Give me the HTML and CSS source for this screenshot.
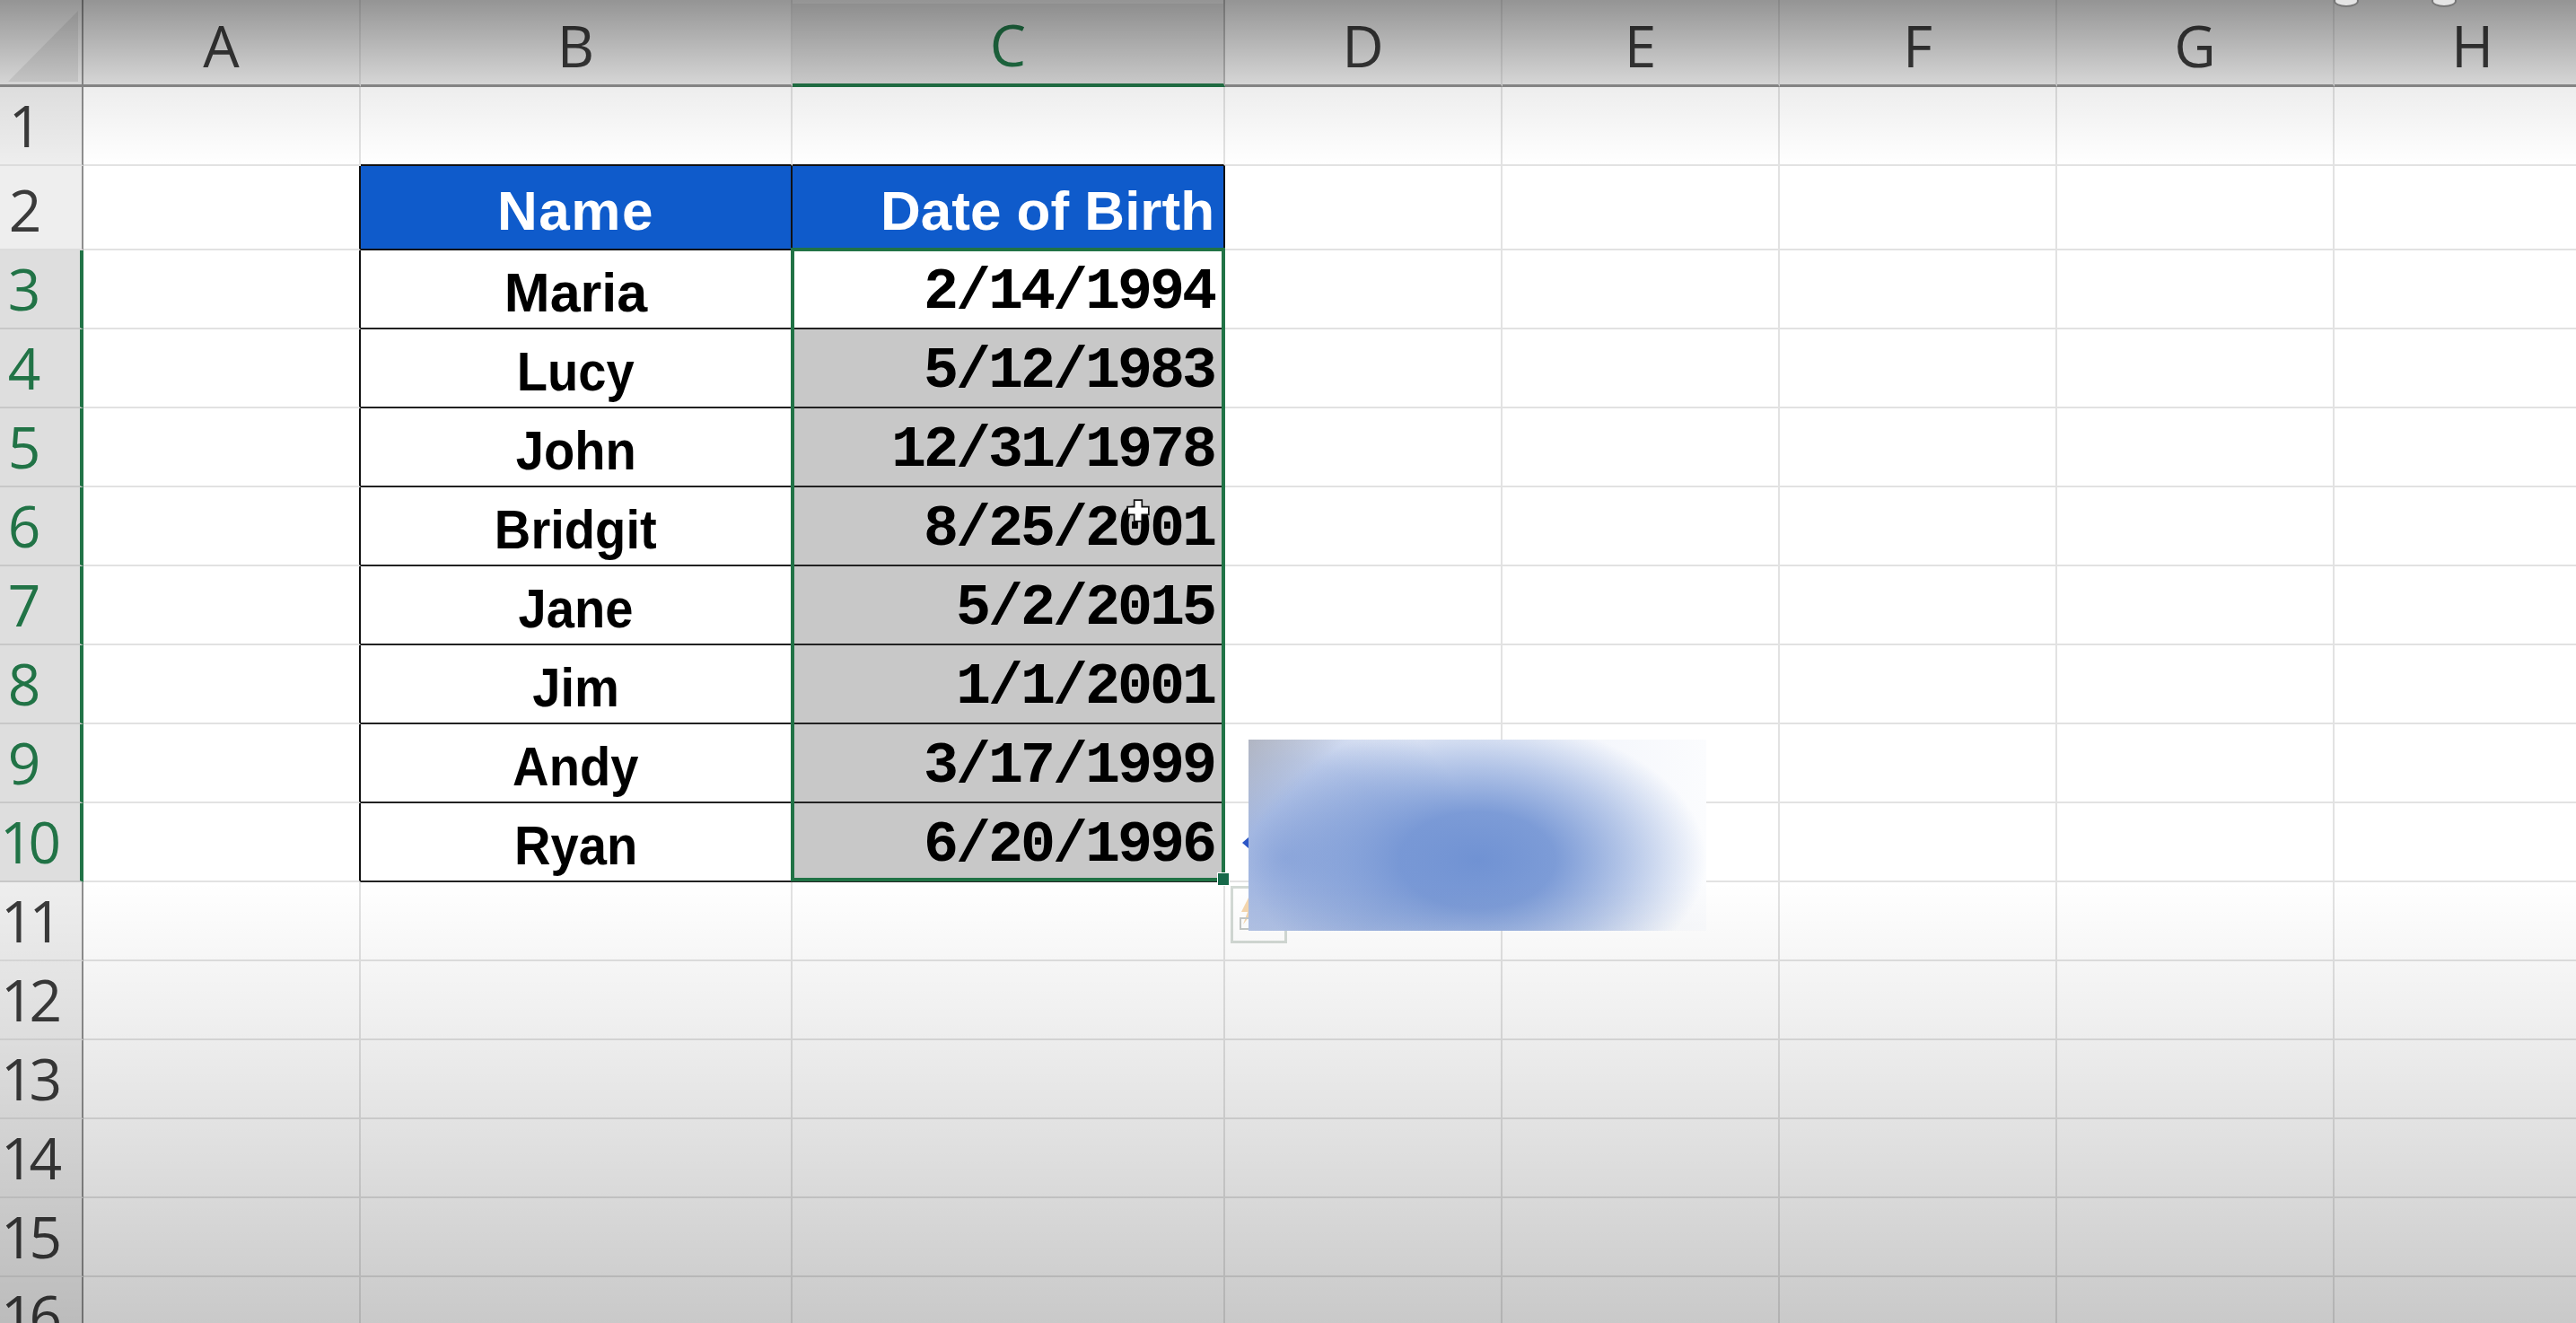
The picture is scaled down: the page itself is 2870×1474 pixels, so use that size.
FILE: index.html
```html
<!DOCTYPE html>
<html lang="en">
<head>
<meta charset="utf-8">
<title>Date of Birth sheet</title>
<link rel="stylesheet" href="styles.css">
</head>
<body>
<main class="sheet">
<table class="grid">
<colgroup><col class="c0"><col class="cs"><col class="cb"><col class="cc"><col class="cs"><col class="cs"><col class="cs"><col class="cs"><col class="cs"></colgroup>
<thead>
<tr class="rh"><th class="corner"><svg class="tri" width="78" height="79" viewBox="0 0 78 79"><polygon points="78,0 78,79 0,79"/></svg></th><th class="col">A</th><th class="col">B</th><th class="col sel">C</th><th class="col">D</th><th class="col">E</th><th class="col">F</th><th class="col">G</th><th class="col">H</th></tr>
</thead>
<tbody>
<tr class="r1"><th class="row one">1</th><td></td><td class="top"></td><td class="top"></td><td></td><td></td><td></td><td></td><td></td></tr>
<tr class="r2"><th class="row one">2</th><td class="lf"></td><td class="hd name">Name</td><td class="hd dob">Date of Birth</td><td></td><td></td><td></td><td></td><td></td></tr>
<tr><th class="row one on">3</th><td class="lf"></td><td class="nm">Maria</td><td class="dt act">2/14/1994</td><td></td><td></td><td></td><td></td><td></td></tr>
<tr><th class="row one on">4</th><td class="lf"></td><td class="nm"><span class="sq">Lucy</span></td><td class="dt">5/12/1983</td><td></td><td></td><td></td><td></td><td></td></tr>
<tr><th class="row one on">5</th><td class="lf"></td><td class="nm"><span class="sq">John</span></td><td class="dt">12/31/1978</td><td></td><td></td><td></td><td></td><td></td></tr>
<tr><th class="row one on">6</th><td class="lf"></td><td class="nm"><span class="sq">Bridgit</span></td><td class="dt">8/25/2001</td><td></td><td></td><td></td><td></td><td></td></tr>
<tr><th class="row one on">7</th><td class="lf"></td><td class="nm"><span class="sq">Jane</span></td><td class="dt">5/2/2015</td><td></td><td></td><td></td><td></td><td></td></tr>
<tr><th class="row one on">8</th><td class="lf"></td><td class="nm"><span class="sq">Jim</span></td><td class="dt">1/1/2001</td><td></td><td></td><td></td><td></td><td></td></tr>
<tr><th class="row one on">9</th><td class="lf"></td><td class="nm"><span class="sq">Andy</span></td><td class="dt">3/17/1999</td><td></td><td></td><td></td><td></td><td></td></tr>
<tr><th class="row on">10</th><td class="lf"></td><td class="nm"><span class="sq">Ryan</span></td><td class="dt">6/20/1996</td><td></td><td></td><td></td><td></td><td></td></tr>
<tr><th class="row">11</th><td></td><td></td><td></td><td></td><td></td><td></td><td></td><td></td></tr>
<tr><th class="row">12</th><td></td><td></td><td></td><td></td><td></td><td></td><td></td><td></td></tr>
<tr><th class="row">13</th><td></td><td></td><td></td><td></td><td></td><td></td><td></td><td></td></tr>
<tr><th class="row">14</th><td></td><td></td><td></td><td></td><td></td><td></td><td></td><td></td></tr>
<tr><th class="row">15</th><td></td><td></td><td></td><td></td><td></td><td></td><td></td><td></td></tr>
<tr><th class="row">16</th><td></td><td></td><td></td><td></td><td></td><td></td><td></td><td></td></tr>
</tbody>
</table>
<div class="frame"></div>
<div class="handle"></div>
<div class="quick">
<svg class="bolt" width="22" height="40" viewBox="0 0 22 40"><polygon points="12,0 2,20 9,20 4,34 20,13 12,13 18,0" fill="#f6d7ae"/><rect x="1" y="27" width="12" height="12" fill="none" stroke="#c4c8c6" stroke-width="2"/></svg>
</div>
<svg class="arrow" width="8" height="14" viewBox="0 0 8 14"><polygon points="0,7 8,0 8,14" fill="#2c56c6"/></svg>
<div class="blur"></div>
<svg class="cursor" width="28" height="28" viewBox="0 0 26 26"><path d="M9 2h8v7h7v8h-7v7H9v-7H2V9h7z" fill="#fff" stroke="#111" stroke-width="1.6"/></svg>
<div class="shade"></div>
<div class="dot d1"></div>
<div class="dot d2"></div>
</main>
</body>
</html>
```
FILE: styles.css
```css
html, body {
  margin: 0;
  padding: 0;
  background: #fff;
}
body {
  width: 2870px;
  height: 1474px;
  overflow: hidden;
}
.sheet {
  position: relative;
  width: 2870px;
  height: 1474px;
  overflow: hidden;
}
.grid {
  table-layout: fixed;
  width: 2910px;
  border-collapse: separate;
  border-spacing: 0;
  font-family: "Liberation Sans", Arial, sans-serif;
}
.c0 { width: 93px; }
.cs { width: 309px; }
.cb { width: 481px; }
.cc { width: 482px; }
tr { height: 88px; }
.rh { height: 97px; }
.r1 { height: 87px; }
.r2 { height: 94px; }
td, th {
  box-sizing: border-box;
  padding: 0;
  overflow: hidden;
  white-space: nowrap;
  border-right: 2px solid #e2e2e2;
  border-bottom: 2px solid #e2e2e2;
}
.corner, .col {
  background: #e8e8e8;
  border-bottom: 3px solid #8e8e8e;
  vertical-align: bottom;
  text-align: center;
  font: 400 64px/86px "Open Sans", sans-serif;
  color: #3a3a3a;
}
.col { border-right-color: #d4d4d4; }
.corner {
  border-right: 2px solid #8e8e8e;
  text-align: left;
  line-height: 0;
}
.tri {
  display: block;
  margin: 0 0 3px 9px;
  fill: #d6d6d6;
}
.col.sel {
  background: linear-gradient(#e8e8e8 4px, #dadada 4px);
  color: #217346;
  border-bottom: 4px solid #217346;
  border-right-color: #b0b0b0;
}
.row {
  background: #eeeeee;
  border-right: 2px solid #8e8e8e;
  border-bottom-color: #dcdcdc;
  vertical-align: bottom;
  text-align: center;
  padding-right: 26px;
  font: 400 64px/86px "Open Sans", sans-serif;
  letter-spacing: -5px;
  color: #3a3a3a;
  overflow: visible;
}
.row.one {
  padding-right: 35px;
  letter-spacing: 0;
}
.row.on {
  background: #dedede;
  color: #217346;
  border-right: 4px solid #217346;
  border-bottom-color: #c8c8c8;
}
.lf { border-right-color: #111; }
.top { border-bottom-color: #111; }
.hd {
  background: #0f5bcb;
  color: #fff;
  font-weight: 700;
  font-size: 62px;
  line-height: 84px;
  vertical-align: bottom;
  border-right-color: #111;
  border-bottom-color: #111;
}
.name { text-align: center; letter-spacing: 1.5px; }
.dob { text-align: right; padding-right: 10px; }
.nm {
  color: #000;
  font-weight: 700;
  font-size: 61px;
  line-height: 78px;
  text-align: center;
  vertical-align: bottom;
  border-right-color: #111;
  border-bottom-color: #222;
}
.sq {
  display: inline-block;
  transform: scaleX(.92);
}
.dt {
  background: #c8c8c8;
  color: #000;
  font-family: "Liberation Mono", monospace;
  font-weight: 700;
  font-size: 65px;
  line-height: 78px;
  letter-spacing: -3px;
  text-align: right;
  vertical-align: bottom;
  padding-right: 10px;
  border-right-color: #217346;
  border-bottom-color: #222;
}
.dt.act { background: #fff; }
.frame {
  position: absolute;
  left: 881px;
  top: 276px;
  width: 476px;
  height: 698px;
  border: 4px solid #217346;
}
.handle {
  position: absolute;
  left: 1357px;
  top: 973px;
  width: 12px;
  height: 13px;
  background: #17694a;
  outline: 1px solid #fff;
}
.quick {
  position: absolute;
  left: 1371px;
  top: 987px;
  width: 57px;
  height: 58px;
  border: 3px solid #d3dad5;
}
.bolt {
  position: absolute;
  left: 7px;
  top: 6px;
}
.arrow {
  position: absolute;
  left: 1384px;
  top: 932px;
}
.blur {
  position: absolute;
  left: 1391px;
  top: 824px;
  width: 510px;
  height: 213px;
  background:
    linear-gradient(135deg, rgba(165, 167, 176, .7) 0, rgba(165, 167, 176, 0) 15%),
    radial-gradient(ellipse 50% 74% at 50% 63%, #7092d3 0, rgba(112, 146, 211, .9) 34%, rgba(112, 146, 211, .45) 68%, rgba(112, 146, 211, 0) 100%),
    radial-gradient(ellipse 42% 85% at 8% 62%, rgba(120, 150, 212, .75) 0, rgba(120, 150, 212, .4) 60%, rgba(120, 150, 212, 0) 100%),
    linear-gradient(90deg, #e6ebf6 0, #f0f3fa 60%, #fbfcfe 100%);
}
.cursor {
  position: absolute;
  left: 1254px;
  top: 555px;
}
.shade {
  position: absolute;
  inset: 0;
  pointer-events: none;
  background:
    linear-gradient(rgba(0, 0, 0, .36) 0, rgba(0, 0, 0, .07) 97px, rgba(0, 0, 0, 0) 184px, rgba(0, 0, 0, 0) 982px, rgba(0, 0, 0, .07) 1157px, rgba(0, 0, 0, .21) 1474px);
}
.dot {
  position: absolute;
  top: -6px;
  width: 24px;
  height: 10px;
  background: #e4e4e4;
  border: 2px solid #777;
  border-radius: 50%;
}
.d1 { left: 2600px; }
.d2 { left: 2709px; }
```
